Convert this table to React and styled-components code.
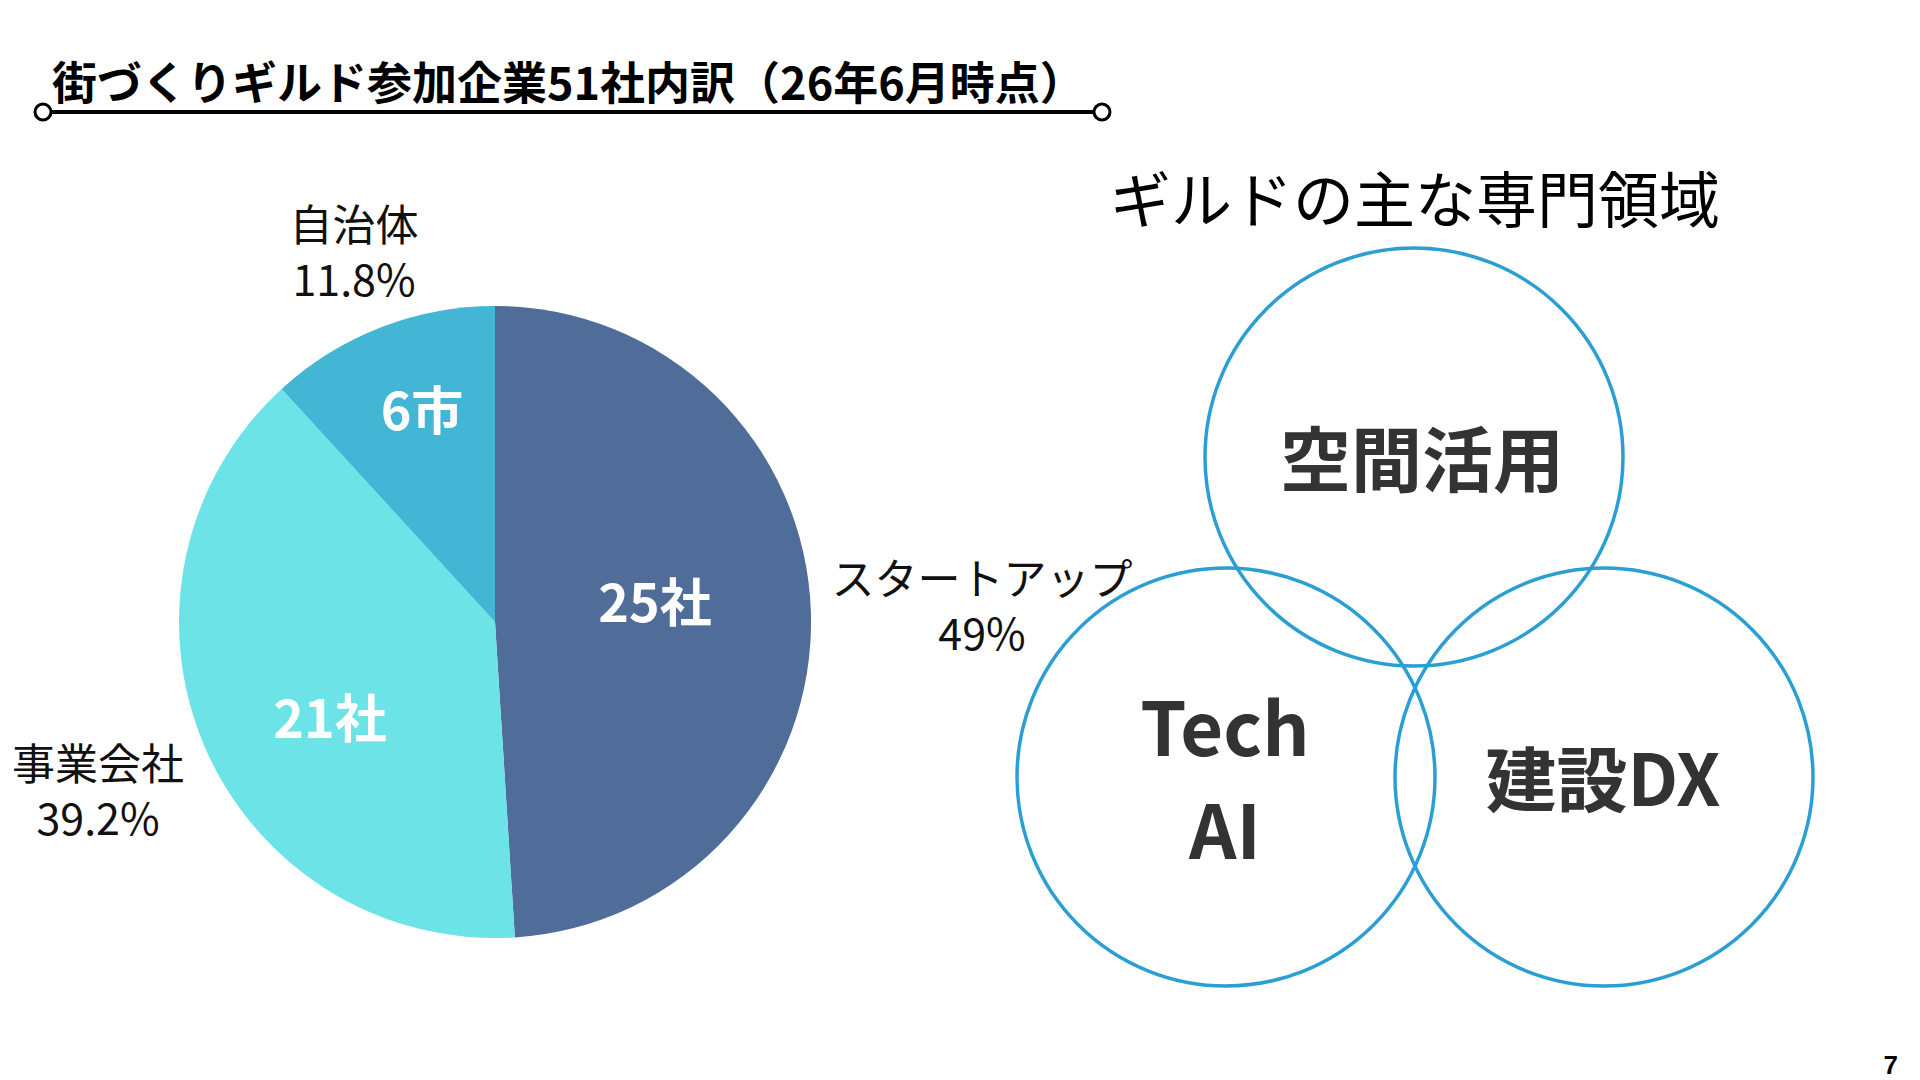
import React from 'react';
import styled, { createGlobalStyle } from 'styled-components';

const GlobalStyle = createGlobalStyle`
  html, body {
    margin: 0;
    padding: 0;
    background: #fff;
  }
  body {
    font-family: "Noto Sans CJK JP", "Noto Sans", sans-serif;
    color: #000;
  }
`;

const Slide = styled.div`
  width: 1920px;
  height: 1080px;
  display: flex;
  flex-direction: column;
  background: #fff;
  overflow: hidden;
`;

const Header = styled.header`
  padding: 58px 0 26px 43px;
`;

const Title = styled.h1`
  margin: 0 0 7px 9px;
  font-size: 45px;
  line-height: 45px;
  font-weight: 700;
  white-space: nowrap;
`;

const Rule = styled.div`
  position: relative;
  width: 1059px;
  height: 4px;
  background: #000;
  &:before,
  &:after {
    content: '';
    position: absolute;
    top: 50%;
    width: 19px;
    height: 19px;
    box-sizing: border-box;
    border: 3.5px solid #000;
    border-radius: 50%;
    background: #fff;
    transform: translate(-50%, -50%);
  }
  &:before {
    left: 0;
  }
  &:after {
    left: 100%;
  }
`;

const Body = styled.main`
  display: flex;
  height: 912px;
`;

const PiePanel = styled.section`
  position: relative;
  width: 1000px;
  flex-shrink: 0;
`;

const PieSvg = styled.svg`
  display: block;
  margin: 162px 0 0 175px;
`;

// category name + share, placed beside its slice
const PieLabel = styled.div`
  position: absolute;
  left: ${(p) => p.$x}px;
  top: ${(p) => p.$y}px;
  transform: translate(-50%, -50%);
  display: flex;
  flex-direction: column;
  align-items: center;
  font-size: 43px;
  line-height: 55px;
  white-space: nowrap;
  color: #111;
`;

const SliceValue = styled.div`
  position: absolute;
  left: ${(p) => p.$x}px;
  top: ${(p) => p.$y}px;
  transform: translate(-50%, -50%);
  font-size: 52px;
  line-height: 52px;
  font-weight: 700;
  color: #fff;
  white-space: nowrap;
`;

const VennPanel = styled.section`
  width: 830px;
  display: flex;
  flex-direction: column;
  align-items: center;
`;

const VennHeading = styled.h2`
  margin: 26px 0 14px;
  font-size: 61px;
  line-height: 61px;
  font-weight: 400;
  white-space: nowrap;
`;

const VennDiagram = styled.div`
  position: relative;
  width: 830px;
  height: 760px;
  svg {
    display: block;
  }
`;

const VennLabel = styled.div`
  position: absolute;
  left: ${(p) => p.$x}px;
  top: ${(p) => p.$y}px;
  transform: translate(-50%, -50%);
  display: flex;
  flex-direction: column;
  align-items: center;
  font-size: ${(p) => p.$size}px;
  line-height: ${(p) => p.$lh || p.$size}px;
  font-weight: 700;
  color: #333;
  white-space: nowrap;
`;

const Footer = styled.footer`
  display: flex;
  justify-content: flex-end;
  padding-right: 22px;
`;

const PageNumber = styled.span`
  font-family: "Liberation Sans", Arial, sans-serif;
  font-size: 26px;
  line-height: 26px;
  font-weight: 700;
`;

const slices = [
  { d: 'M320 320 L320 4 A316 316 0 0 1 339.84 635.38 Z', fill: '#4f6d98' },
  { d: 'M320 320 L339.84 635.38 A316 316 0 0 1 106.6 86.95 Z', fill: '#6ce3e7' },
  { d: 'M320 320 L106.6 86.95 A316 316 0 0 1 320 4 Z', fill: '#43b6d6' },
];

const shares = [
  { name: '自治体', pct: '11.8%', x: 354, y: 110 },
  { name: 'スタートアップ', pct: '49%', x: 982, y: 464 },
  { name: '事業会社', pct: '39.2%', x: 98, y: 649 },
];

const counts = [
  { text: '25社', x: 655, y: 460 },
  { text: '21社', x: 330, y: 576 },
  { text: '6市', x: 422, y: 268 },
];

const circles = [
  { cx: 414, cy: 216 },
  { cx: 226, cy: 536 },
  { cx: 604, cy: 536 },
];

const App = () => {
  return (
    <>
      <GlobalStyle />
      <Slide>
        <Header>
          <Title>街づくりギルド参加企業51社内訳（26年6月時点）</Title>
          <Rule />
        </Header>
        <Body>
          <PiePanel>
            <PieSvg width="640" height="640" viewBox="0 0 640 640">
              {slices.map((s, i) => (
                <path key={i} d={s.d} fill={s.fill} />
              ))}
            </PieSvg>
            {counts.map((c) => (
              <SliceValue key={c.text} $x={c.x} $y={c.y}>
                {c.text}
              </SliceValue>
            ))}
            {shares.map((s) => (
              <PieLabel key={s.name} $x={s.x} $y={s.y}>
                <span>{s.name}</span>
                <span>{s.pct}</span>
              </PieLabel>
            ))}
          </PiePanel>
          <VennPanel>
            <VennHeading>ギルドの主な専門領域</VennHeading>
            <VennDiagram>
              <svg width="830" height="760" viewBox="0 0 830 760">
                {circles.map((c, i) => (
                  <circle
                    key={i}
                    cx={c.cx}
                    cy={c.cy}
                    r="209"
                    fill="none"
                    stroke="#2b9fd3"
                    strokeWidth="3.5"
                  />
                ))}
              </svg>
              <VennLabel $x={422} $y={214} $size={71}>空間活用</VennLabel>
              <VennLabel $x={225} $y={534} $size={74} $lh={103}>
                <span>Tech</span>
                <span>AI</span>
              </VennLabel>
              <VennLabel $x={603} $y={534} $size={71}>建設DX</VennLabel>
            </VennDiagram>
          </VennPanel>
        </Body>
        <Footer>
          <PageNumber>7</PageNumber>
        </Footer>
      </Slide>
    </>
  );
};

export default App;
